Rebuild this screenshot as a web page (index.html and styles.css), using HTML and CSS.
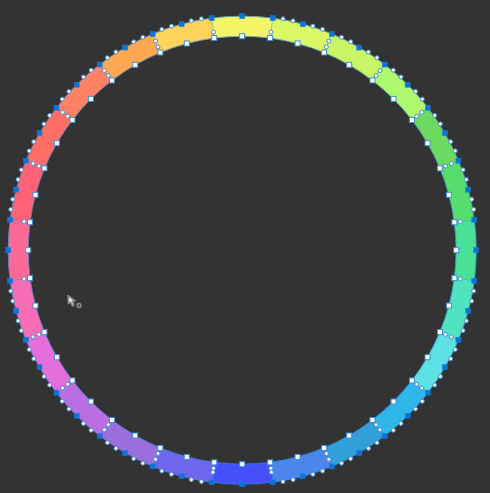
FILE: index.html
```html
<!DOCTYPE html>
<html lang="en">
<head>
<meta charset="utf-8">
<title>Colour wheel</title>
<link rel="stylesheet" href="styles.css">
</head>
<body>
<svg id="canvas" class="canvas" viewBox="0 0 490 493" width="490" height="493" xmlns="http://www.w3.org/2000/svg">
  <g id="segments"></g>
  <g id="handles"></g>
  <g class="cursor">
    <path class="cursor-arrow" d="M68 295.5 L68.5 303.5 L70.5 302 L72.5 306 L74 305 L72.5 301.2 L75 301 Z"/>
    <circle class="cursor-dot" cx="79" cy="305.5" r="2"/>
  </g>
</svg>
<script src="script.js"></script>
</body>
</html>
```
FILE: styles.css
```css
html, body {
  margin: 0;
  padding: 0;
  background: #333333;
  overflow: hidden;
}
.canvas {
  display: block;
}
.segment {
  stroke-width: 0.6;
  stroke-linejoin: round;
}
.edge {
  fill: none;
  stroke: #2c8fe0;
  stroke-width: 0.8;
  stroke-opacity: 0.75;
}
.seam {
  stroke: #2c8fe0;
  stroke-width: 0.8;
  stroke-opacity: 0.4;
}
.anchor {
  fill: #0f72d8;
  stroke: #1b7fe0;
  stroke-width: 0.5;
}
.corner {
  fill: #ffffff;
  stroke: #3f8ed6;
  stroke-width: 1;
}
.knob {
  fill: #ffffff;
  stroke: #4a8cc8;
  stroke-width: 1;
}
.cursor-arrow {
  fill: #f2f2f2;
  stroke: #8a8a8a;
  stroke-width: 1.6;
  stroke-linejoin: round;
}
.cursor-dot {
  fill: #4a4a4a;
  stroke: #8f8f8f;
  stroke-width: 1.3;
}
```
FILE: script.js
```js
var CX = 242.2, CY = 250.2, RO = 234, RI = 214;
var COLORS = [
  '#f5f569', '#dcf766', '#c9f565', '#aff86f', '#6cd960', '#55de6d',
  '#4ae097', '#4fe4bf', '#5de1e2', '#30b7ea', '#319fd8', '#4a86ec',
  '#4550fb', '#6f66ee', '#9a6edc', '#bb6ee2', '#e56fda', '#f86cb4',
  '#fa6a96', '#ff6176', '#fe6e65', '#ff8266', '#ffa854', '#ffd35c'
];
var NS = 'http://www.w3.org/2000/svg';
var segments = document.getElementById('segments');
var handles = document.getElementById('handles');

function pt(deg, r) {
  var a = deg * Math.PI / 180;
  return [CX + r * Math.sin(a), CY - r * Math.cos(a)];
}
function add(parent, tag, attrs) {
  var el = document.createElementNS(NS, tag);
  for (var k in attrs) el.setAttribute(k, attrs[k]);
  parent.appendChild(el);
  return el;
}
function square(p, size, cls) {
  add(handles, 'rect', {
    x: (p[0] - size / 2).toFixed(2), y: (p[1] - size / 2).toFixed(2),
    width: size, height: size, 'class': cls
  });
}
function knob(p) {
  add(handles, 'circle', { cx: p[0].toFixed(2), cy: p[1].toFixed(2), r: 2, 'class': 'knob' });
}

// Fills first, then the arcs and seams on top of every fill.
COLORS.forEach(function (color, k) {
  var c = k * 15, a = c - 7.5, b = c + 7.5;
  var p1 = pt(a, RO), p2 = pt(b, RO), p3 = pt(b, RI), p4 = pt(a, RI);
  var d = 'M' + p1.join(' ') +
    ' A' + RO + ' ' + RO + ' 0 0 1 ' + p2.join(' ') +
    ' L' + p3.join(' ') +
    ' A' + RI + ' ' + RI + ' 0 0 0 ' + p4.join(' ') + ' Z';
  add(segments, 'path', { d: d, fill: color, stroke: color, 'class': 'segment' });
});
COLORS.forEach(function (color, k) {
  var c = k * 15, a = c - 7.5, b = c + 7.5;
  var p1 = pt(a, RO), p2 = pt(b, RO), p3 = pt(b, RI), p4 = pt(a, RI);
  add(segments, 'path', {
    d: 'M' + p1.join(' ') + ' A' + RO + ' ' + RO + ' 0 0 1 ' + p2.join(' ') +
       ' M' + p3.join(' ') + ' A' + RI + ' ' + RI + ' 0 0 0 ' + p4.join(' '),
    'class': 'edge'
  });
  add(segments, 'line', {
    x1: p2[0], y1: p2[1], x2: p3[0], y2: p3[1], 'class': 'seam'
  });
});

COLORS.forEach(function (color, k) {
  var c = k * 15, b = c + 7.5;
  var onAxis = k % 6 === 0;

  // Curve handles along the outer edge, except on the four axis segments.
  if (!onAxis) {
    [-5, -2.5, 2.5, 5].forEach(function (off) { knob(pt(c + off, RO + 1)); });
  }

  // Handles along the seam after this segment.
  var nextAxis = (k + 1) % 6 === 0;
  var bottom = k === 11 || k === 12;
  if (onAxis || nextAxis) {
    if (bottom) { knob(pt(b, 224)); }
    knob(pt(b, 220));
  } else {
    knob(pt(b, 226.4));
    knob(pt(b, 220));
  }
});

COLORS.forEach(function (color, k) {
  var c = k * 15, b = c + 7.5;
  square(pt(c, RO), 5, 'anchor');
  square(pt(b, RO), 5, 'anchor');
  square(pt(c, RI), 5, 'corner');
  square(pt(b, RI), 5, 'corner');
});
```
